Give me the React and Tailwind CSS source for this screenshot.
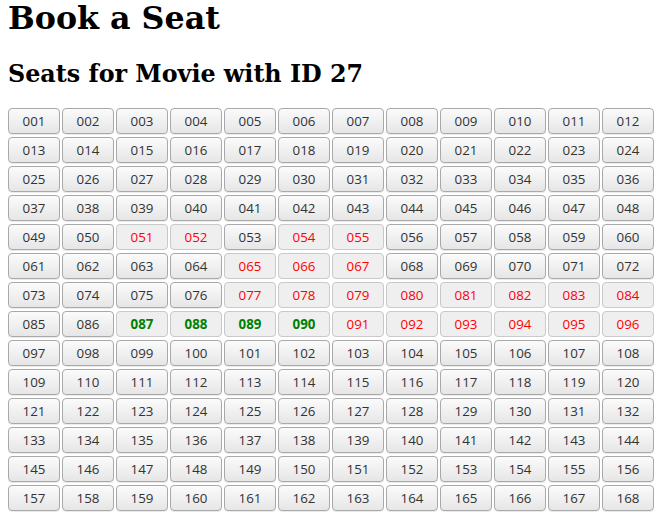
const booked = [51, 52, 54, 55, 65, 66, 67, 77, 78, 79, 80, 81, 82, 83, 84, 91, 92, 93, 94, 95, 96];
const selected = [87, 88, 89, 90];

const seats = Array.from({ length: 168 }, (_, i) => i + 1);

const pad = (n) => String(n).padStart(3, '0');

const App = () => {
  return (
    <div className="px-2 bg-white min-h-screen">
      <h1 className="m-0 text-[31.7px] leading-[36px] font-bold text-black font-['DejaVu_Serif',serif]">
        Book a Seat
      </h1>
      <h2 className="mt-[24px] mb-5 text-[23.8px] leading-[28px] font-bold text-black font-['DejaVu_Serif',serif]">
        Seats for Movie with ID 27
      </h2>

      <div className="grid grid-cols-[repeat(12,52px)] gap-x-[2px] gap-y-[3px]">
        {seats.map(n => {
          const isBooked = booked.includes(n);
          const isSelected = selected.includes(n);
          const flat = isBooked || isSelected;
          return (
            <button
              key={n}
              className={`h-[26px] w-[52px] rounded-[4px] border pt-px text-[13.333px] leading-none font-['Open_Sans',sans-serif] ${flat
                ? 'bg-[#efefef] border-[#c9c9c9]'
                : 'bg-gradient-to-b from-[#fbfbfb] to-[#e6e6e6] border-[#a9a9a9] shadow-[0_1px_0_rgba(0,0,0,0.08)]'} ${isBooked
                ? 'text-[#ff0000]'
                : isSelected
                  ? 'text-[#008000] font-bold'
                  : 'text-[#333]'}`}
            >
              {pad(n)}
            </button>
          );
        })}
      </div>
    </div>
  );
};

export default App;
